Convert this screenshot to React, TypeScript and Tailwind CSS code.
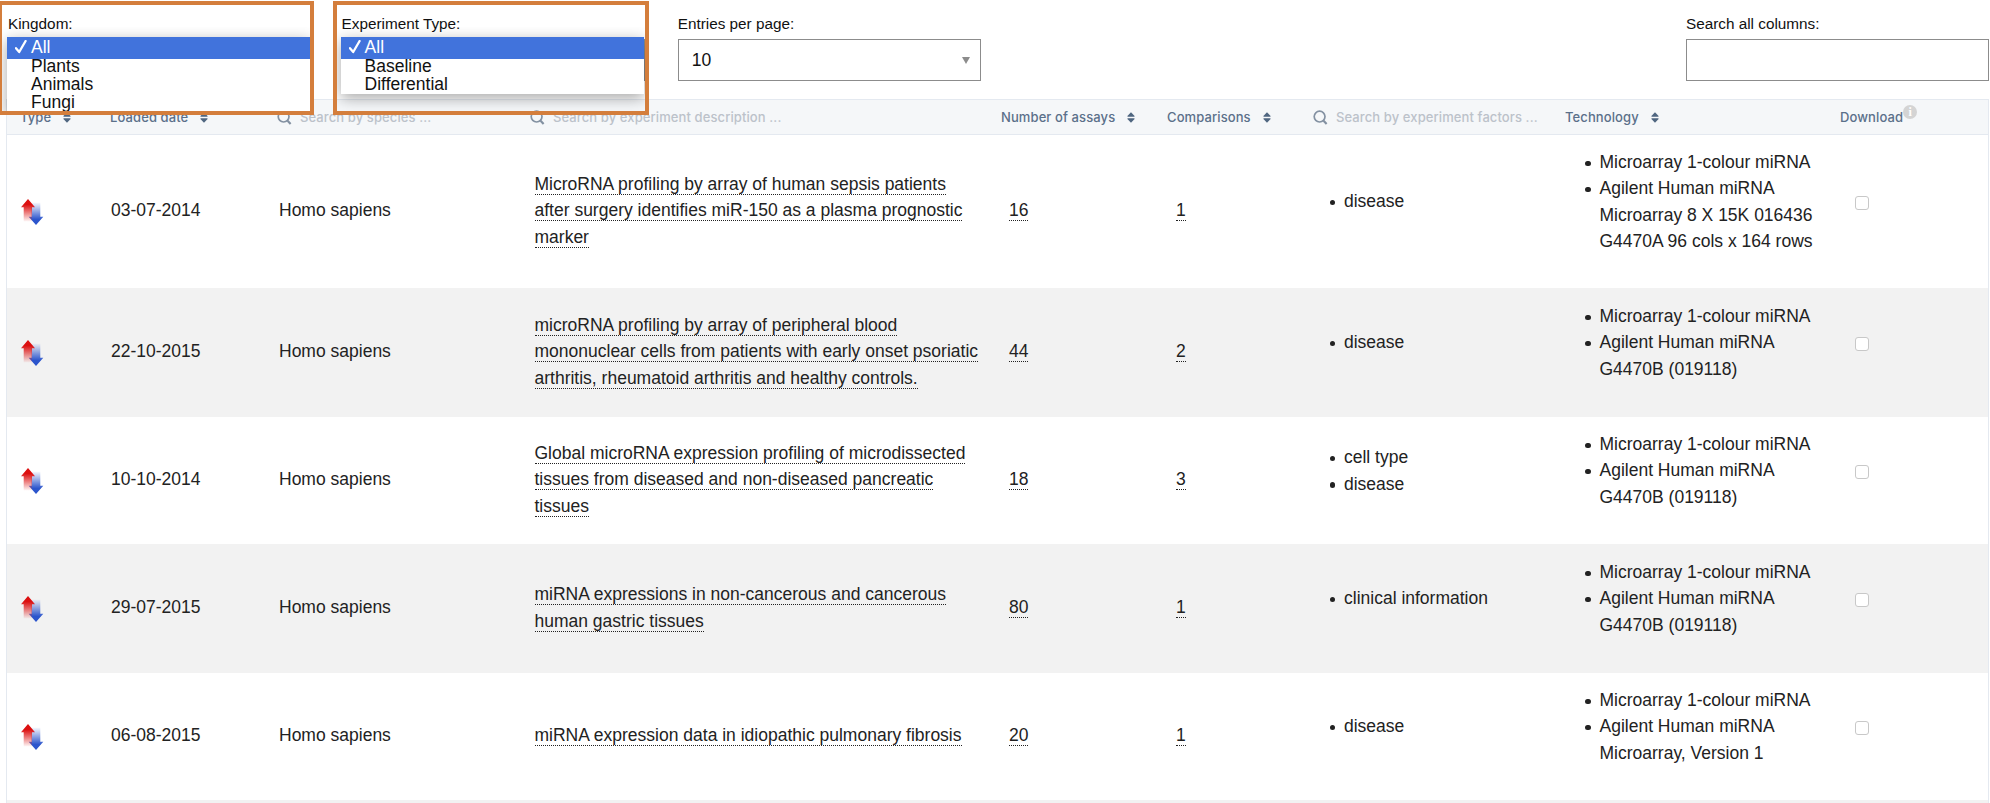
import React from "react";

type Row = {
  date: string;
  title: string[];
  assays: number;
  comparisons: number;
  factors: string[];
  tech: string[][];
  height: string;
};

const MICROARRAY = ["Microarray 1-colour miRNA"];
const AGILENT_B = ["Agilent Human miRNA", "G4470B (019118)"];

const rows: Row[] = [
  {
    date: "03-07-2014",
    title: [
      "MicroRNA profiling by array of human sepsis patients",
      "after surgery identifies miR-150 as a plasma prognostic",
      "marker",
    ],
    assays: 16,
    comparisons: 1,
    factors: ["disease"],
    tech: [MICROARRAY, ["Agilent Human miRNA", "Microarray 8 X 15K 016436", "G4470A 96 cols x 164 rows"]],
    height: "h-[153px]",
  },
  {
    date: "22-10-2015",
    title: [
      "microRNA profiling by array of peripheral blood",
      "mononuclear cells from patients with early onset psoriatic",
      "arthritis, rheumatoid arthritis and healthy controls.",
    ],
    assays: 44,
    comparisons: 2,
    factors: ["disease"],
    tech: [MICROARRAY, AGILENT_B],
    height: "h-[129px]",
  },
  {
    date: "10-10-2014",
    title: [
      "Global microRNA expression profiling of microdissected",
      "tissues from diseased and non-diseased pancreatic",
      "tissues",
    ],
    assays: 18,
    comparisons: 3,
    factors: ["cell type", "disease"],
    tech: [MICROARRAY, AGILENT_B],
    height: "h-[127px]",
  },
  {
    date: "29-07-2015",
    title: ["miRNA expressions in non-cancerous and cancerous", "human gastric tissues"],
    assays: 80,
    comparisons: 1,
    factors: ["clinical information"],
    tech: [MICROARRAY, AGILENT_B],
    height: "h-[129px]",
  },
  {
    date: "06-08-2015",
    title: ["miRNA expression data in idiopathic pulmonary fibrosis"],
    assays: 20,
    comparisons: 1,
    factors: ["disease"],
    tech: [MICROARRAY, ["Agilent Human miRNA", "Microarray, Version 1"]],
    height: "h-[127px]",
  },
];

const COLUMNS =
  "grid grid-cols-[104px_168px_255px_467px_166px_146px_252px_275px_149px]";

function SortIcon() {
  return (
    <svg width="8" height="11" viewBox="0 0 8 11" className="mb-[2px] shrink-0 fill-[#4f6680]">
      <path d="M4 .3 L7.6 4 Q7.8 4.8 7.1 4.8 H.9 Q.2 4.8 .4 4 Z" />
      <path d="M4 10.7 L7.6 7 Q7.8 6.2 7.1 6.2 H.9 Q.2 6.2 .4 7 Z" />
    </svg>
  );
}

function SearchIcon() {
  return (
    <svg width="15" height="15" viewBox="0 0 15 15" fill="none" className="mb-[2px] shrink-0 stroke-[#8391a2]">
      <circle cx="6.6" cy="6.6" r="5.4" strokeWidth="1.7" />
      <path d="M10.6 10.8 L13.6 13.9" strokeWidth="2.2" />
    </svg>
  );
}

function UpDownIcon({ id }: { id: string }) {
  return (
    <svg width="24" height="28" viewBox="0 0 24 28">
      <defs>
        <linearGradient id={`${id}-up`} x1="0" y1="0" x2="0" y2="1">
          <stop offset="0.25" stopColor="#dc1010" />
          <stop offset="1" stopColor="#dc1010" stopOpacity="0.03" />
        </linearGradient>
        <linearGradient id={`${id}-down`} x1="0" y1="0" x2="0" y2="1">
          <stop offset="0" stopColor="#2f5bd0" stopOpacity="0.03" />
          <stop offset="0.75" stopColor="#2c55cc" />
        </linearGradient>
      </defs>
      <path d="M11.6 4.5 H20.3 V18.8 H23.3 L16 27 L8.7 18.8 H11.6 Z" fill={`url(#${id}-down)`} />
      <path d="M8 1 L15 9.3 H12 V23.5 H3.7 V9.3 H1 Z" fill={`url(#${id}-up)`} />
    </svg>
  );
}

function CheckMark() {
  return (
    <svg width="12" height="14" viewBox="0 0 12 14" fill="none" stroke="white" strokeWidth="2.3">
      <path d="M1 8.2 L4.2 12 L10.6 1" strokeLinejoin="round" strokeLinecap="round" />
    </svg>
  );
}

function OpenSelect({ label, options, panel, shift }: { label: string; options: string[]; panel: string; shift: string }) {
  return (
    <div className={`relative ${shift}`}>
      <div className="h-[39px] pt-[13px] text-[15.3px] leading-[22px]">{label}</div>
      <div className="h-[42px] border border-[#8c8c8c]" />
      <div className="absolute -left-[6px] top-[27px] h-[86px] w-[311px] overflow-hidden pl-[5px] pt-[10px]">
        <div
          className={`w-[303px] overflow-hidden bg-white text-[17.5px] shadow-[0_4px_14px_rgba(0,0,0,0.35)] ${panel}`}
        >
          <div className="flex h-[21.5px] items-center bg-[#4173dc] pb-px pl-[8px] text-white">
            <CheckMark />
            <span className="ml-[4px] leading-[20px]">{options[0]}</span>
          </div>
          {options.slice(1).map((o) => (
            <div key={o} className="h-[18px] pl-[24px] leading-[15px]">
              {o}
            </div>
          ))}
        </div>
      </div>
    </div>
  );
}

function Bullets({ items }: { items: string[][] }) {
  return (
    <ul className="pb-[18px]">
      {items.map((lines) => (
        <li key={lines[0]} className="flex gap-[9px]">
          <span className="mt-[11.5px] size-[5.5px] shrink-0 rounded-full bg-[#222]" />
          <div>
            {lines.map((l) => (
              <div key={l} className="whitespace-nowrap">
                {l}
              </div>
            ))}
          </div>
        </li>
      ))}
    </ul>
  );
}

function Dotted({ children }: { children: React.ReactNode }) {
  return <span className="whitespace-nowrap border-b border-dotted border-[#222]">{children}</span>;
}

export default function App() {
  return (
    <div className="relative h-[803px] w-[1990px] overflow-hidden bg-white font-['Liberation_Sans',Arial,sans-serif] text-[#111]">
      <div className="relative z-10 grid h-[99px] grid-cols-[repeat(6,303px)] gap-x-[32.6px] pl-[8px]">
        <OpenSelect label="Kingdom:" options={["All", "Plants", "Animals", "Fungi"]} panel="h-[76px]" shift="" />
        <OpenSelect label="Experiment Type:" options={["All", "Baseline", "Differential"]} panel="h-[57px]" shift="-ml-[2px] mr-[2px]" />
        <div className="-ml-[1.5px] mr-[1.5px]">
          <div className="h-[39px] pt-[13px] text-[15.3px] leading-[22px]">Entries per page:</div>
          <div className="flex h-[42px] items-center justify-between border border-[#8c8c8c] pl-[13px] pr-[10px] text-[17.5px]">
            10
            <svg width="8" height="7" viewBox="0 0 8 7" className="fill-[#8c8c8c]">
              <path d="M0 0H8L4 7Z" />
            </svg>
          </div>
        </div>
        <div className="col-start-6">
          <div className="h-[39px] pt-[13px] text-[15.3px] leading-[22px]">Search all columns:</div>
          <div className="h-[42px] border border-[#8c8c8c]" />
        </div>
      </div>

      <div className="ml-[6px] w-[1983px] border-x border-[#e4e9f0]">
        <div
          className={`${COLUMNS} h-9 items-center border-y border-[#e4e9f0] bg-[#f5f7f9] pt-[2px] font-['Inter',sans-serif] text-[13px] font-medium tracking-[0.1px] text-[#5b708a]`}
        >
          <div className="flex items-center gap-[12px] pl-[13px]">Type <SortIcon /></div>
          <div className="-ml-px flex items-center gap-[12px]">Loaded date <SortIcon /></div>
          <div className="-ml-[2px] flex items-center gap-[8px] text-[#bcc2ca]"><SearchIcon /> Search by species ...</div>
          <div className="-ml-[4px] flex items-center gap-[8px] text-[#bcc2ca]"><SearchIcon /> Search by experiment description ...</div>
          <div className="flex items-center gap-[12px]">Number of assays <SortIcon /></div>
          <div className="flex items-center gap-[12px]">Comparisons <SortIcon /></div>
          <div className="flex items-center gap-[8px] whitespace-nowrap text-[#bcc2ca]"><SearchIcon /> Search by experiment factors ...</div>
          <div className="flex items-center gap-[12px]">Technology <SortIcon /></div>
          <div className="flex items-center">
            Download
            <span className="-mt-[13px] flex size-[14px] items-center justify-center rounded-full bg-[#d4d4d4] font-['Liberation_Serif',serif] text-[12px] font-bold leading-none tracking-normal text-white">
              i
            </span>
          </div>
        </div>

        {rows.map((r, i) => (
          <div
            key={r.date}
            className={`${COLUMNS} ${r.height} items-center pb-[2px] text-[17.5px] leading-[26.25px] text-[#222] ${i % 2 ? "bg-[#f2f2f2]" : "bg-white"}`}
          >
            <div className="pl-[12.5px] pt-[2px]"><UpDownIcon id={`diff${i}`} /></div>
            <div>{r.date}</div>
            <div>Homo sapiens</div>
            <div className="pl-[0.5px]">
              {r.title.map((t) => (
                <div key={t}><Dotted>{t}</Dotted></div>
              ))}
            </div>
            <div className="pl-[8px]"><Dotted>{r.assays}</Dotted></div>
            <div className="pl-[9px]"><Dotted>{r.comparisons}</Dotted></div>
            <div className="pl-[16.5px]"><Bullets items={r.factors.map((f) => [f])} /></div>
            <div className="pl-[20px]"><Bullets items={r.tech} /></div>
            <div className="pb-[16px] pl-[15px]">
              <div className="size-[14px] rounded-[3px] border border-[#c8c8c8] bg-white" />
            </div>
          </div>
        ))}
        <div className="h-[4px] bg-[#f2f2f2]" />
      </div>

      <div className="absolute -left-[2px] top-px z-20 h-[114px] w-[316px] border-4 border-[#d47e3c]" />
      <div className="absolute left-[333px] top-px z-20 h-[114px] w-[316px] border-4 border-[#d47e3c]" />
    </div>
  );
}
